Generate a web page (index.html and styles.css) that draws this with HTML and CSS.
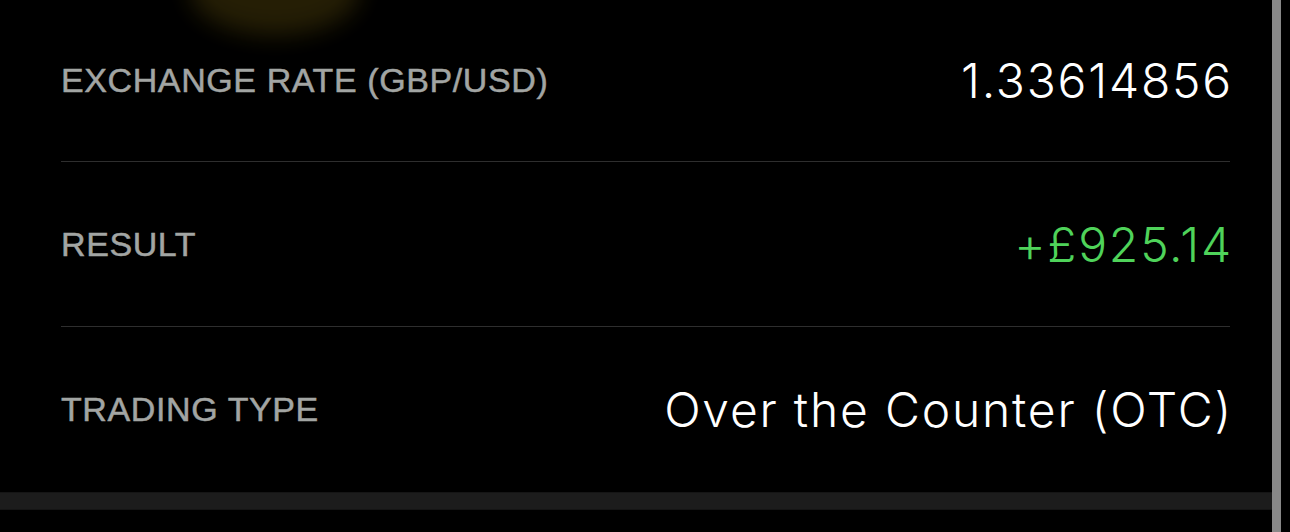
FILE: index.html
```html
<!DOCTYPE html>
<html lang="en">
<head>
<meta charset="utf-8">
<title>Trade details</title>
<link rel="stylesheet" href="styles.css">
</head>
<body>
<div class="screen">
  <div class="glow"></div>
  <div class="content">
    <div class="list">
      <div class="row first">
        <span class="label">EXCHANGE RATE (GBP/USD)</span>
        <span class="value">1.33614856</span>
      </div>
      <div class="row">
        <span class="label">RESULT</span>
        <span class="value positive">+£925.14</span>
      </div>
      <div class="row last">
        <span class="label">TRADING TYPE</span>
        <span class="value">Over the Counter (OTC)</span>
      </div>
    </div>
    <div class="band"></div>
  </div>
  <div class="scrollbar"></div>
</div>
</body>
</html>
```
FILE: styles.css
```css
html, body {
  margin: 0;
  padding: 0;
  background: #000;
}
.screen {
  position: relative;
  width: 1290px;
  height: 532px;
  overflow: hidden;
  background: #000;
  display: flex;
}
.glow {
  position: absolute;
  left: 190px;
  top: -55px;
  width: 170px;
  height: 90px;
  border-radius: 50%;
  background: #2c2406;
  filter: blur(12px);
  opacity: 0.85;
}
.content {
  position: relative;
  width: 1272px;
  display: flex;
  flex-direction: column;
}
.list {
  margin-left: 61px;
  width: 1169px;
  display: flex;
  flex-direction: column;
}
.row {
  height: 165px;
  display: flex;
  align-items: center;
  justify-content: space-between;
  border-bottom: 1px solid #2e2e2e;
  box-sizing: border-box;
}
.row.first {
  height: 162px;
}
.row.last {
  border-bottom: none;
  height: 165px;
}
.label {
  font-family: "Liberation Sans", Arial, sans-serif;
  font-size: 34px;
  letter-spacing: 0.6px;
  color: #a2a5a3;
  font-weight: 400;
  -webkit-text-stroke: 0.5px #a2a5a3;
}
.value {
  font-family: Inter, "Noto Sans", sans-serif;
  font-size: 48px;
  font-weight: 300;
  letter-spacing: 1.8px;
  color: #fff;
  margin-right: -3px;
}
.value.positive {
  color: #4fd35a;
}
.band {
  height: 16px;
  background: #1c1c1c;
  border-top: 1px solid #151515;
  border-bottom: 1px solid #151515;
}
.scrollbar {
  width: 9px;
  height: 532px;
  background: #888;
}
```
